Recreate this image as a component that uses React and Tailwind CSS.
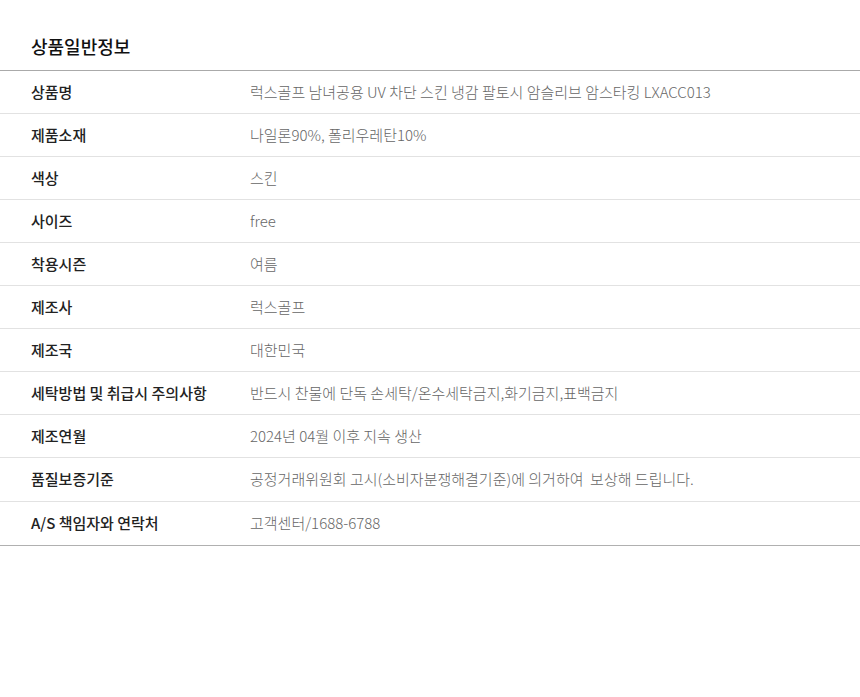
const ROWS = [
  ['상품명', '럭스골프 남녀공용 UV 차단 스킨 냉감 팔토시 암슬리브 암스타킹 LXACC013'],
  ['제품소재', '나일론90%, 폴리우레탄10%'],
  ['색상', '스킨'],
  ['사이즈', 'free'],
  ['착용시즌', '여름'],
  ['제조사', '럭스골프'],
  ['제조국', '대한민국'],
  ['세탁방법 및 취급시 주의사항', '반드시 찬물에 단독 손세탁/온수세탁금지,화기금지,표백금지'],
  ['제조연월', '2024년 04월 이후 지속 생산'],
  ['품질보증기준', '공정거래위원회 고시(소비자분쟁해결기준)에 의거하여  보상해 드립니다.'],
  ['A/S 책임자와 연락처', '고객센터/1688-6788'],
]

export default function App() {
  return (
    <div className="w-[860px] h-[697px] bg-white font-['Noto_Sans_CJK_KR','Noto_Sans',sans-serif]">
      <h2 className="pl-[31px] pt-[33px] pb-[11px] text-[18px] leading-[26px] font-medium text-[#111] border-b border-[#aaaaaa]">
        상품일반정보
      </h2>
      <div className="border-b border-[#b0b0b0]">
        {ROWS.map(([label, value], i) => (
          <div
            key={label}
            className={`flex items-center text-[15px] ${i === 9 ? 'h-[44px]' : 'h-[43px]'} ${i < ROWS.length - 1 ? 'border-b border-[#e2e2e2]' : ''}`}
          >
            <div className="w-[250px] shrink-0 pl-[31px] font-medium text-[#222]">{label}</div>
            <div className="font-light text-[#666] whitespace-pre">{value}</div>
          </div>
        ))}
      </div>
    </div>
  )
}
